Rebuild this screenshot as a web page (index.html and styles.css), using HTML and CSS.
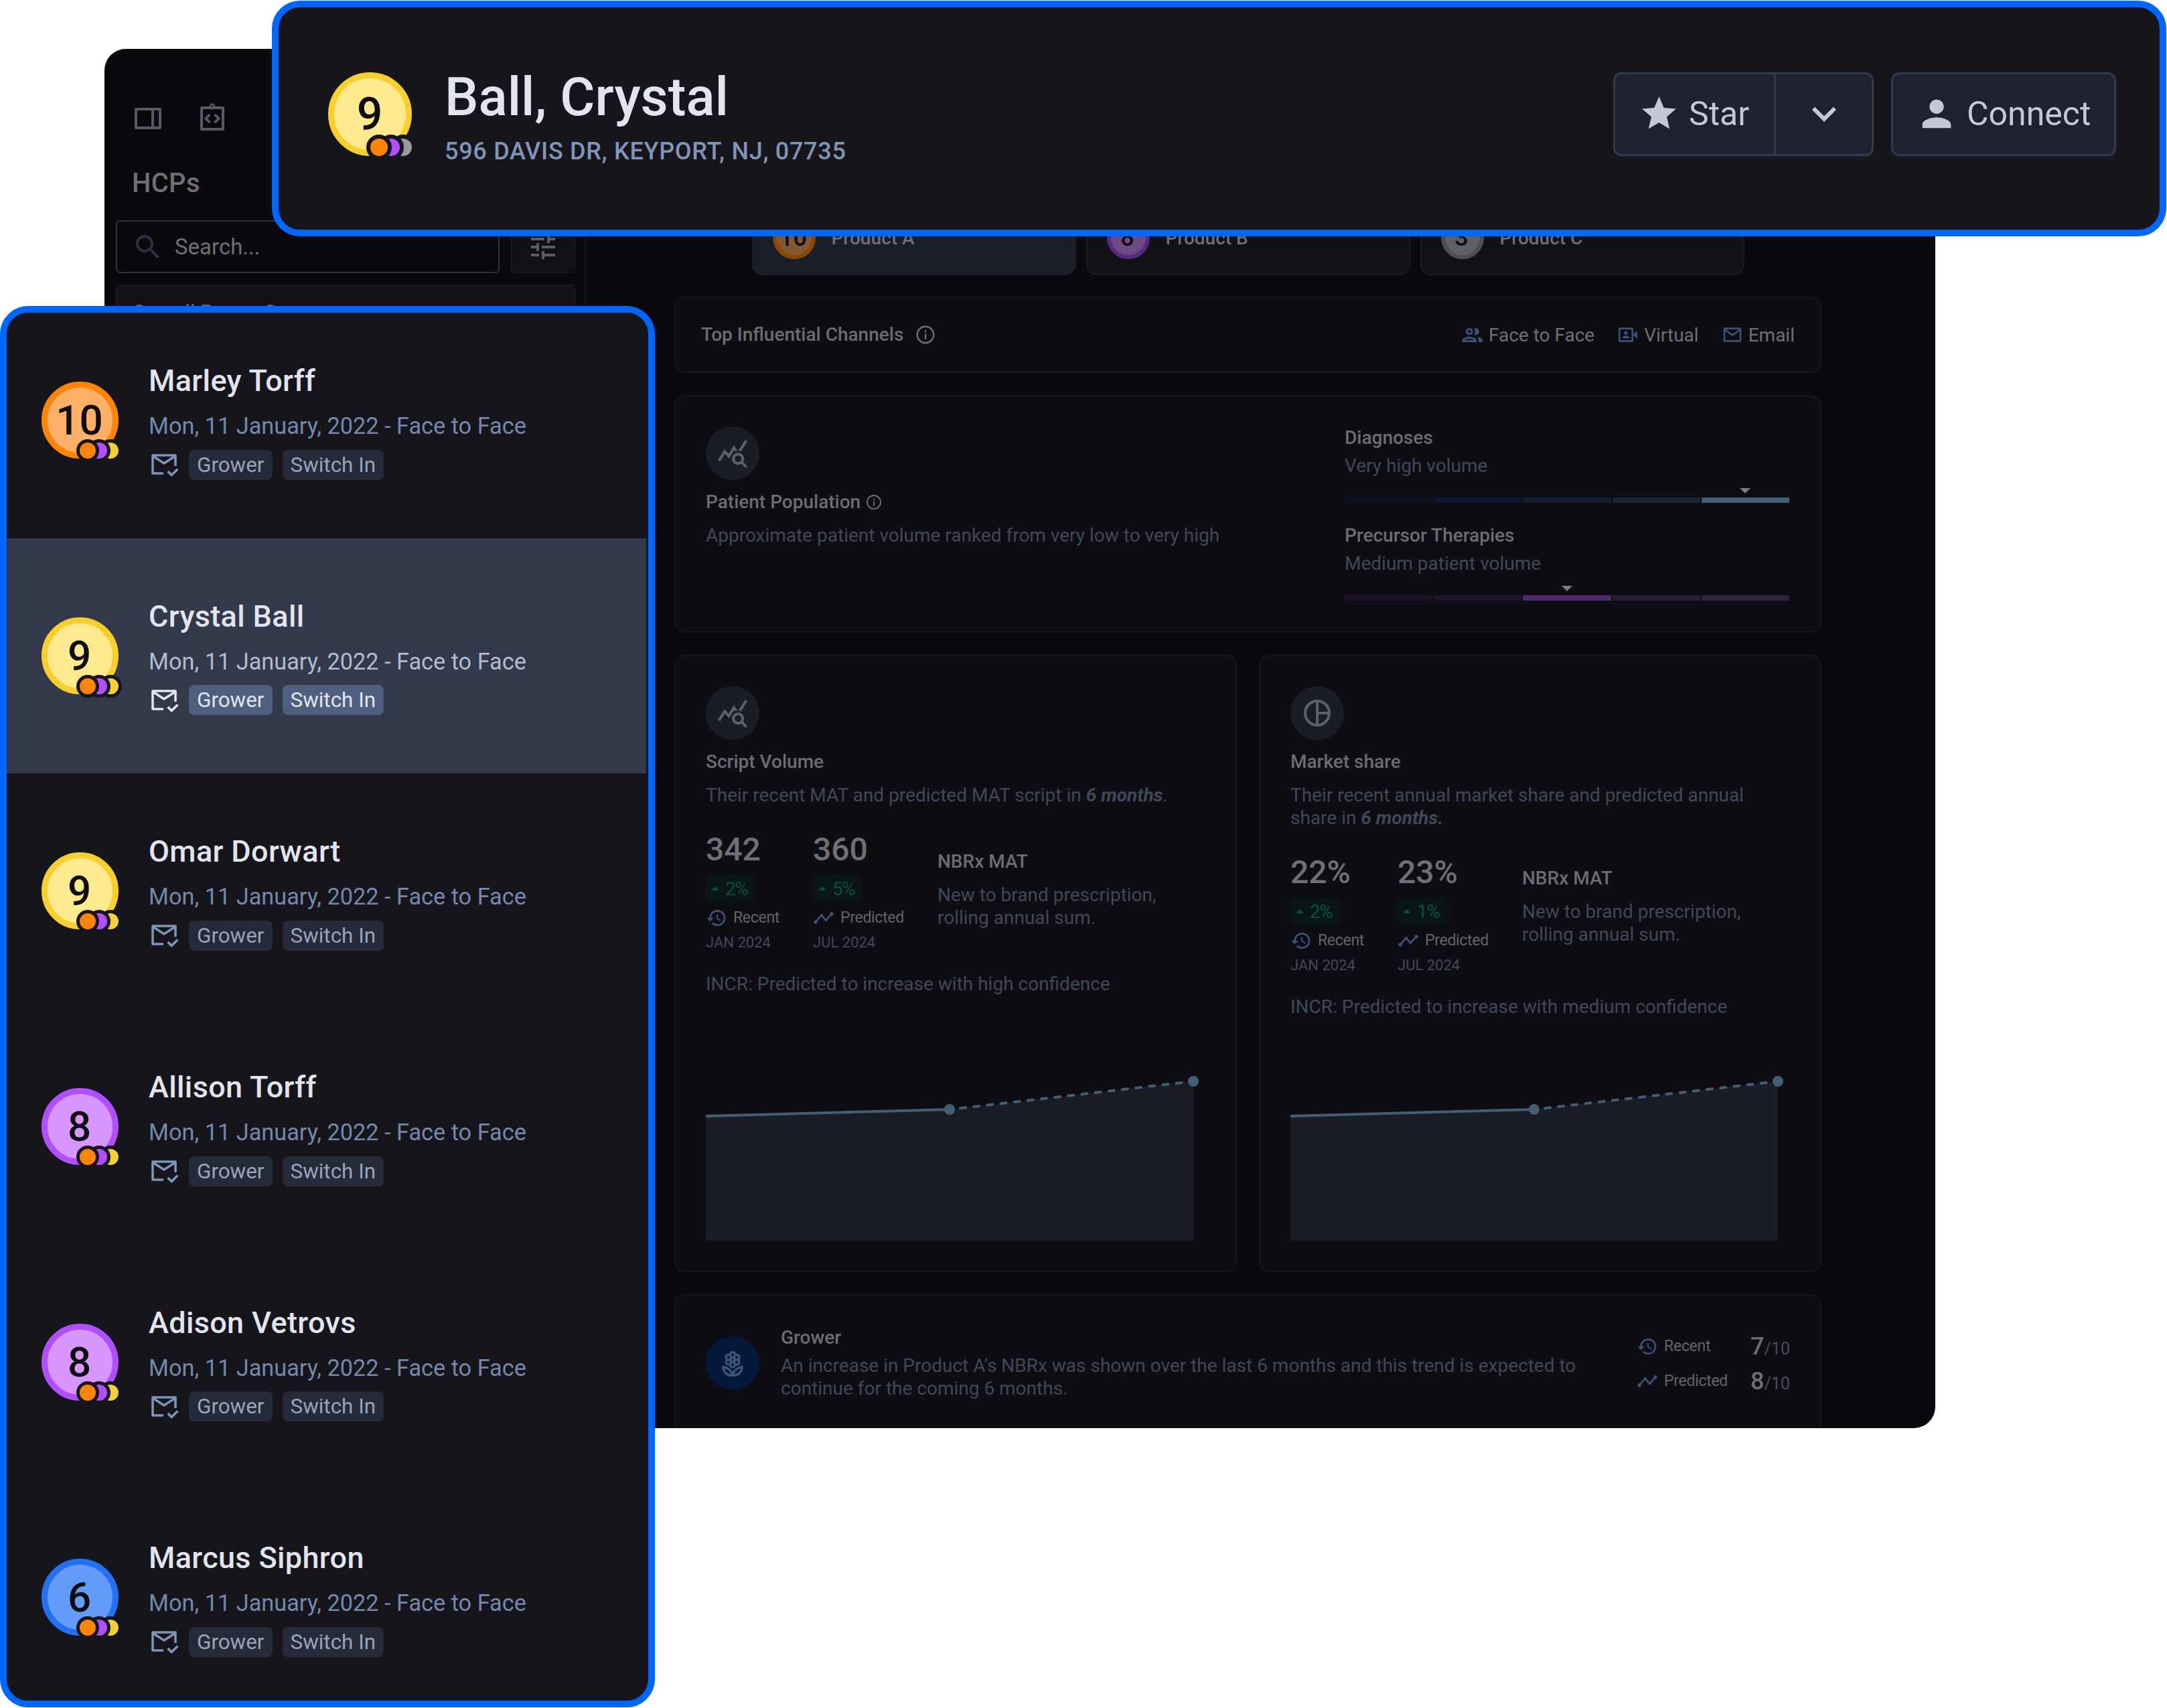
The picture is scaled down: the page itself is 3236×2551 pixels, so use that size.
FILE: index.html
```html
<!DOCTYPE html>
<html lang="en">
<head>
  <meta charset="UTF-8" />
  <meta name="viewport" content="width=device-width, initial-scale=1.0"/>
  <title>HCP Profile - Ball, Crystal</title>
  <link rel="stylesheet" href="styles.css">
</head>
<body>

  <!-- Icon set -->
  <svg class="icon-defs" width="0" height="0">
    <symbol id="i-panel" viewBox="0 0 24 24"><path d="M3 5h18v14H3zM15.5 5v14" fill="none" stroke="currentColor" stroke-width="2" stroke-linejoin="round"/></symbol>
    <symbol id="i-clip" viewBox="0 0 24 24"><path d="M4 4h16v16H4z" fill="none" stroke="currentColor" stroke-width="2" stroke-linejoin="round"/><circle cx="12" cy="3" r="1.6" fill="none" stroke="currentColor" stroke-width="1.2"/><path d="M10.2 9l-3 3 3 3M13.8 9l3 3-3 3" fill="none" stroke="currentColor" stroke-width="1.9"/></symbol>
    <symbol id="i-search" viewBox="0 0 24 24"><path fill="currentColor" d="M15.5 14h-.79l-.28-.27A6.471 6.471 0 0 0 16 9.5 6.5 6.5 0 1 0 9.5 16c1.61 0 3.09-.59 4.23-1.57l.27.28v.79l5 4.99L20.49 19l-4.99-5zm-6 0C7.01 14 5 11.99 5 9.5S7.01 5 9.5 5 14 7.01 14 9.5 11.99 14 9.5 14z"/></symbol>
    <symbol id="i-tune" viewBox="0 0 24 24"><path fill="currentColor" d="M3 17v2h6v-2H3zM3 5v2h10V5H3zm10 16v-2h8v-2h-8v-2h-2v6h2zM7 9v2H3v2h4v2h2V9H7zm14 4v-2H11v2h10zm-6-4h2V7h4V5h-4V3h-2v6z"/></symbol>
    <symbol id="i-star" viewBox="0 0 24 24"><path fill="currentColor" d="M12 17.27L18.18 21l-1.64-7.03L22 9.24l-7.19-.61L12 2 9.19 8.63 2 9.24l5.46 4.73L5.82 21z"/></symbol>
    <symbol id="i-person" viewBox="0 0 24 24"><path fill="currentColor" d="M12 12c2.21 0 4-1.79 4-4s-1.79-4-4-4-4 1.79-4 4 1.79 4 4 4zm0 2c-2.67 0-8 1.34-8 4v2h16v-2c0-2.66-5.33-4-8-4z"/></symbol>
    <symbol id="i-chevron" viewBox="0 0 24 24"><path fill="currentColor" d="M7.41 8.59L12 13.17l4.59-4.58L18 10l-6 6-6-6z"/></symbol>
    <symbol id="i-mail-read" viewBox="0 0 24 24"><path d="M11 18.5H3V5h17v8M3 5.5l8.5 5.5L20 5.5M14.3 17l2.8 2.8 4.6-4.6" fill="none" stroke="currentColor" stroke-width="1.8" stroke-linejoin="round"/></symbol>
    <symbol id="i-info" viewBox="0 0 24 24"><circle cx="12" cy="12" r="9.2" fill="none" stroke="currentColor" stroke-width="1.8"/><path fill="currentColor" d="M11.1 7h1.8v2h-1.8zM11.1 10.6h1.8V17h-1.8z"/></symbol>
    <symbol id="i-group" viewBox="1.6 1.3 21 21"><path fill="currentColor" d="M9 13.75c-2.34 0-7 1.17-7 3.5V19h14v-1.75c0-2.33-4.66-3.5-7-3.5zM4.34 17c.84-.58 2.87-1.25 4.66-1.25s3.82.67 4.66 1.25H4.34zM9 12c1.93 0 3.5-1.57 3.5-3.5S10.93 5 9 5 5.5 6.57 5.5 8.5 7.07 12 9 12zm0-5c.83 0 1.5.67 1.5 1.5S9.83 10 9 10s-1.5-.67-1.5-1.5S8.17 7 9 7zm7.04 6.81c1.16.84 1.96 1.96 1.96 3.44V19h4v-1.75c0-2.02-3.5-3.17-5.96-3.44zM15 12c1.93 0 3.5-1.57 3.5-3.5S16.93 5 15 5c-.54 0-1.04.13-1.5.35.63.89 1 1.98 1 3.15s-.37 2.26-1 3.15c.46.22.96.35 1.5.35z"/></symbol>
    <symbol id="i-virtual" viewBox="0 0 24 24"><path d="M2.5 5H17v14H2.5z" fill="none" stroke="currentColor" stroke-width="2" stroke-linejoin="round"/><circle cx="9.8" cy="10" r="2" fill="currentColor"/><path fill="currentColor" d="M6 16v-.8c0-1.5 2.5-2.2 3.8-2.2s3.8.7 3.8 2.2v.8zM18 11.5l4.5-4v9l-4.5-4z"/></symbol>
    <symbol id="i-email" viewBox="0 0 24 24"><path d="M3 5h18v14H3zM3 6l9 6.5L21 6" fill="none" stroke="currentColor" stroke-width="2" stroke-linejoin="round"/></symbol>
    <symbol id="i-stats" viewBox="0 0 24 24"><path fill="currentColor" d="M19.88 18.47c.44-.7.7-1.51.7-2.39 0-2.49-2.01-4.5-4.5-4.5s-4.5 2.01-4.5 4.5 2.01 4.5 4.49 4.5c.88 0 1.7-.26 2.39-.7L21.58 23 23 21.58l-3.12-3.11zm-3.8.11a2.5 2.5 0 1 1 0-5 2.5 2.5 0 0 1 0 5zm-.36-8.5c-.74.02-1.45.18-2.1.45l-.55-.83-3.8 6.18-3.01-3.52-3.63 5.81L1 17l5-8 3 3.5L13 6l2.72 4.08zm2.59.5c-.64-.28-1.33-.45-2.05-.49L21.38 2 23 3.18l-4.69 7.4z"/></symbol>
    <symbol id="i-pie" viewBox="0 0 24 24"><path d="M12 2.8v18.4M12 12h9" fill="none" stroke="currentColor" stroke-width="2"/><circle cx="12" cy="12" r="9" fill="none" stroke="currentColor" stroke-width="2"/></symbol>
    <symbol id="i-history" viewBox="0 0 24 24"><path fill="currentColor" d="M13 3a9 9 0 0 0-9 9H1l3.89 3.89.07.14L9 12H6c0-3.87 3.13-7 7-7s7 3.13 7 7-3.13 7-7 7c-1.93 0-3.68-.79-4.94-2.06l-1.42 1.42A8.954 8.954 0 0 0 13 21a9 9 0 0 0 0-18zm-1 5v5l4.28 2.54.72-1.21-3.5-2.08V8H12z"/></symbol>
    <symbol id="i-timeline" viewBox="0 0 24 24"><path d="M3 16.5L9.5 9l5 5.5L21 7.5" fill="none" stroke="currentColor" stroke-width="2"/><g fill="currentColor"><circle cx="3" cy="16.5" r="2"/><circle cx="9.5" cy="9" r="1.5"/><circle cx="14.5" cy="14.5" r="1.5"/><circle cx="21" cy="7.5" r="2"/></g></symbol>
    <symbol id="i-flower" viewBox="0 0 24 24">
      <g fill="currentColor"><circle cx="12" cy="5.4" r="2.6"/><circle cx="8.8" cy="7.5" r="2.6"/><circle cx="15.2" cy="7.5" r="2.6"/><circle cx="8.8" cy="11.2" r="2.6"/><circle cx="15.2" cy="11.2" r="2.6"/><circle cx="12" cy="13.1" r="2.6"/><circle cx="12" cy="9.4" r="3"/></g>
      <g fill="#041839"><circle cx="12" cy="5.7" r="1"/><circle cx="8.9" cy="7.6" r="1"/><circle cx="15.1" cy="7.6" r="1"/><circle cx="8.9" cy="11.2" r="1"/><circle cx="15.1" cy="11.2" r="1"/><circle cx="12" cy="13.1" r="1"/><circle cx="12" cy="9.4" r=".7"/></g>
      <path d="M4.9 14.9c3.8.4 6.5 2.7 7 6.3-4 0-6.7-2.5-7-6.3zM19.1 14.9c-3.8.4-6.5 2.7-7 6.3 4 0 6.7-2.5 7-6.3z" fill="none" stroke="currentColor" stroke-width="1.7" stroke-linejoin="round"/>
    </symbol>
  </svg>

  <!-- App window -->
  <div class="app">
    <aside class="sidebar">
      <div class="sidebar-tools">
        <svg class="icon-48"><use href="#i-panel"/></svg>
        <svg class="icon-48"><use href="#i-clip"/></svg>
      </div>
      <h2>HCPs</h2>
      <div class="search-row">
        <div class="search"><svg class="icon-48"><use href="#i-search"/></svg><span>Search...</span></div>
        <div class="filter"><svg class="icon-48"><use href="#i-tune"/></svg></div>
      </div>
      <div class="select">Overall Power Score</div>
    </aside>

    <main class="content">
      <div class="tabs">
        <div class="tab active"><div class="score score-sm orange">10</div>Product A</div>
        <div class="tab"><div class="score score-sm purple">8</div>Product B</div>
        <div class="tab"><div class="score score-sm gray">3</div>Product C</div>
      </div>

      <section class="card channels">
        <h3>Top Influential Channels</h3>
        <svg class="icon-32"><use href="#i-info"/></svg>
        <div class="channel-list">
          <span><svg class="icon-32"><use href="#i-group"/></svg>Face to Face</span>
          <span><svg class="icon-32"><use href="#i-virtual"/></svg>Virtual</span>
          <span><svg class="icon-32"><use href="#i-email"/></svg>Email</span>
        </div>
      </section>

      <section class="card population">
        <div>
          <div class="round"><svg class="icon-48"><use href="#i-stats"/></svg></div>
          <h3>Patient Population <svg class="icon-26"><use href="#i-info"/></svg></h3>
          <p>Approximate patient volume ranked from very low to very high</p>
        </div>
        <div class="volumes">
          <h3>Diagnoses</h3>
          <p>Very high volume</p>
          <div class="scale blue"><i></i><i></i><i></i><i></i><i class="on"></i></div>
          <h3>Precursor Therapies</h3>
          <p>Medium patient volume</p>
          <div class="scale violet"><i></i><i></i><i class="on"></i><i></i><i></i></div>
        </div>
      </section>

      <div class="columns">
        <section class="card metric">
          <div class="round"><svg class="icon-48"><use href="#i-stats"/></svg></div>
          <h3>Script Volume</h3>
          <p>Their recent MAT and predicted MAT script in <b>6 months</b>.</p>
          <div class="stats">
            <div class="stat">
              <strong>342</strong>
              <span class="delta">2%</span>
              <span class="label"><svg class="icon-32"><use href="#i-history"/></svg>Recent</span>
              <small>JAN 2024</small>
            </div>
            <div class="stat">
              <strong>360</strong>
              <span class="delta">5%</span>
              <span class="label"><svg class="icon-32"><use href="#i-timeline"/></svg>Predicted</span>
              <small>JUL 2024</small>
            </div>
            <div class="about">
              <h3>NBRx MAT</h3>
              <p>New to brand prescription,<br>rolling annual sum.</p>
            </div>
          </div>
          <p class="trend">INCR: Predicted to increase with high confidence</p>
          <svg class="chart" viewBox="0 0 728 253">
            <path class="area" d="M0 67L364 57 728 15V253H0z"/>
            <path class="line" d="M0 67L364 57"/>
            <path class="line dashed" d="M380 55.2L728 15"/>
            <circle cx="364" cy="57" r="8"/><circle cx="728" cy="15" r="8"/>
          </svg>
        </section>

        <section class="card metric market">
          <div class="round"><svg class="icon-48"><use href="#i-pie"/></svg></div>
          <h3>Market share</h3>
          <p>Their recent annual market share and predicted annual<br>share in <b>6 months.</b></p>
          <div class="stats">
            <div class="stat">
              <strong>22%</strong>
              <span class="delta">2%</span>
              <span class="label"><svg class="icon-32"><use href="#i-history"/></svg>Recent</span>
              <small>JAN 2024</small>
            </div>
            <div class="stat">
              <strong>23%</strong>
              <span class="delta">1%</span>
              <span class="label"><svg class="icon-32"><use href="#i-timeline"/></svg>Predicted</span>
              <small>JUL 2024</small>
            </div>
            <div class="about">
              <h3>NBRx MAT</h3>
              <p>New to brand prescription,<br>rolling annual sum.</p>
            </div>
          </div>
          <p class="trend">INCR: Predicted to increase with medium confidence</p>
          <svg class="chart" viewBox="0 0 728 253">
            <path class="area" d="M0 67L364 57 728 15V253H0z"/>
            <path class="line" d="M0 67L364 57"/>
            <path class="line dashed" d="M380 55.2L728 15"/>
            <circle cx="364" cy="57" r="8"/><circle cx="728" cy="15" r="8"/>
          </svg>
        </section>
      </div>

      <section class="card grower">
        <div class="round navy"><svg class="icon-48"><use href="#i-flower"/></svg></div>
        <div class="grower-text">
          <h3>Grower</h3>
          <p>An increase in Product A’s NBRx was shown over the last 6 months and this trend is expected to<br>continue for the coming 6 months.</p>
        </div>
        <div class="ratings">
          <span class="label"><svg class="icon-32"><use href="#i-history"/></svg>Recent</span>
          <span class="rating"><b>7</b>/10</span>
          <span class="label"><svg class="icon-32"><use href="#i-timeline"/></svg>Predicted</span>
          <span class="rating"><b>8</b>/10</span>
        </div>
      </section>
    </main>
  </div>

  <!-- Profile header -->
  <header class="profile">
    <div class="score score-lg yellow">9<div class="dots"><i class="d-orange"></i><i class="d-purple"></i><i class="d-gray"></i></div></div>
    <div class="profile-name">
      <h1>Ball, Crystal</h1>
      <p>596 DAVIS DR, KEYPORT, NJ, 07735</p>
    </div>
    <div class="actions">
      <div class="split">
        <button class="star"><svg><use href="#i-star"/></svg>Star</button>
        <button class="more"><svg><use href="#i-chevron"/></svg></button>
      </div>
      <button class="connect"><svg><use href="#i-person"/></svg>Connect</button>
    </div>
  </header>

  <!-- HCP list -->
  <div class="list-panel">
    <ul class="list">
      <li>
        <div class="score orange">10<div class="dots"><i class="d-orange"></i><i class="d-purple"></i><i class="d-yellow"></i></div></div>
        <div class="info"><h2>Marley Torff</h2><p>Mon, 11 January, 2022 - Face to Face</p>
          <div class="chips"><svg class="icon-48"><use href="#i-mail-read"/></svg><span>Grower</span><span>Switch In</span></div></div>
      </li>
      <li class="selected">
        <div class="score yellow">9<div class="dots"><i class="d-orange"></i><i class="d-purple"></i><i class="d-yellow"></i></div></div>
        <div class="info"><h2>Crystal Ball</h2><p>Mon, 11 January, 2022 - Face to Face</p>
          <div class="chips"><svg class="icon-48"><use href="#i-mail-read"/></svg><span>Grower</span><span>Switch In</span></div></div>
      </li>
      <li>
        <div class="score yellow">9<div class="dots"><i class="d-orange"></i><i class="d-purple"></i><i class="d-yellow"></i></div></div>
        <div class="info"><h2>Omar Dorwart</h2><p>Mon, 11 January, 2022 - Face to Face</p>
          <div class="chips"><svg class="icon-48"><use href="#i-mail-read"/></svg><span>Grower</span><span>Switch In</span></div></div>
      </li>
      <li>
        <div class="score purple">8<div class="dots"><i class="d-orange"></i><i class="d-purple"></i><i class="d-yellow"></i></div></div>
        <div class="info"><h2>Allison Torff</h2><p>Mon, 11 January, 2022 - Face to Face</p>
          <div class="chips"><svg class="icon-48"><use href="#i-mail-read"/></svg><span>Grower</span><span>Switch In</span></div></div>
      </li>
      <li>
        <div class="score purple">8<div class="dots"><i class="d-orange"></i><i class="d-purple"></i><i class="d-yellow"></i></div></div>
        <div class="info"><h2>Adison Vetrovs</h2><p>Mon, 11 January, 2022 - Face to Face</p>
          <div class="chips"><svg class="icon-48"><use href="#i-mail-read"/></svg><span>Grower</span><span>Switch In</span></div></div>
      </li>
      <li>
        <div class="score blue">6<div class="dots"><i class="d-orange"></i><i class="d-purple"></i><i class="d-yellow"></i></div></div>
        <div class="info"><h2>Marcus Siphron</h2><p>Mon, 11 January, 2022 - Face to Face</p>
          <div class="chips"><svg class="icon-48"><use href="#i-mail-read"/></svg><span>Grower</span><span>Switch In</span></div></div>
      </li>
    </ul>
  </div>

</body>
</html>
```
FILE: styles.css
```css
* {
  box-sizing: border-box;
}

body {
  position: relative;
  width: 3236px;
  height: 2551px;
  margin: 0;
  overflow: hidden;
  background: #fff;
  font-family: Roboto, "Liberation Sans", sans-serif;
}

h1, h2, h3, p, ul {
  margin: 0;
  padding: 0;
  font-weight: 500;
}

p, ul {
  font-weight: 400;
}

svg {
  display: block;
  flex: none;
}

.icon-defs {
  position: absolute;
}

.icon-26 { width: 26px; height: 26px; }
.icon-32 { width: 32px; height: 32px; }
.icon-48 { width: 48px; height: 48px; }

/* App window */
.app {
  position: absolute;
  left: 156px;
  top: 73px;
  width: 2734px;
  height: 2060px;
  display: flex;
  overflow: hidden;
  border-radius: 32px;
  background: #0b090e;
  color: #6f6f74;
}

.sidebar {
  width: 719px;
  flex: none;
  padding: 80px 14px 0 17px;
  border-right: 2px solid #131319;
}

.sidebar-tools {
  display: flex;
  gap: 48px;
  padding-left: 24px;
  color: #565a66;
}

.sidebar h2 {
  margin-top: 49px;
  padding-left: 24px;
  font-size: 40px;
  line-height: 48px;
  letter-spacing: .3px;
}

.search-row {
  display: flex;
  gap: 17px;
  margin-top: 31px;
}

.search {
  width: 573px;
  height: 79px;
  display: flex;
  align-items: center;
  gap: 16px;
  padding-left: 22px;
  border: 2px solid #2b3342;
  border-radius: 6px;
  font-size: 33px;
}

.search svg {
  color: #2b3342;
}

.filter {
  flex: 1;
  display: flex;
  align-items: center;
  justify-content: center;
  border: 2px solid #17181f;
  border-radius: 6px;
  background: #111016;
  color: #5c5c63;
}

.select {
  height: 100px;
  margin-top: 17px;
  padding: 22px 22px;
  border: 2px solid #191a21;
  border-radius: 6px;
  background: #121117;
  font-size: 31px;
  line-height: 36px;
}

.content {
  flex: 1;
  display: flex;
  flex-direction: column;
  gap: 33px;
  padding: 226px 170px 0 132px;
}

.tabs {
  flex: none;
  display: flex;
  justify-content: center;
  gap: 15px;
  height: 112px;
  margin-bottom: -1px;
}

.tab {
  width: 484px;
  display: flex;
  align-items: center;
  gap: 24px;
  padding-left: 29px;
  border: 2px solid #1b1c23;
  border-radius: 16px;
  background: #121117;
  font-size: 28px;
  font-weight: 500;
}

.tab.active {
  border-color: #1a1e26;
  background: #1a1e26;
}

.card {
  flex: none;
  border: 2px solid #14161c;
  border-radius: 16px;
  background: #0e0d13;
}

.card h3,
.card p {
  font-size: 28px;
  line-height: 34px;
}

.card h3 {
  color: #6c6c71;
}

.card p {
  margin-top: 16px;
  color: #404858;
}

.card b {
  font-weight: 700;
  font-style: italic;
}

.channels {
  height: 114px;
  display: flex;
  align-items: center;
  padding: 0 38px;
  gap: 17px;
}

.channel-list {
  display: flex;
  gap: 34px;
  margin-left: auto;
  font-size: 28px;
}

.channel-list span {
  display: flex;
  align-items: center;
  gap: 8px;
}

.channel-list svg {
  color: #3f5078;
}

.population {
  height: 355px;
  display: flex;
  justify-content: space-between;
  padding: 45px 46px 45px 45px;
}

.population h3 {
  display: flex;
  align-items: center;
  gap: 7px;
}

.round {
  width: 80px;
  height: 80px;
  flex: none;
  display: flex;
  align-items: center;
  justify-content: center;
  border-radius: 50%;
  background: #1a1d25;
  color: #5f6067;
}

.round.navy {
  background: #041839;
  color: #3f5278;
}

.round + h3 {
  margin-top: 16px;
}

.volumes {
  width: 664px;
}

.card.population .volumes p {
  margin-top: 8px;
}

.scale {
  display: flex;
  gap: 2px;
  margin: 30px 0 32px;
}

.scale i {
  position: relative;
  flex: 1;
  height: 8px;
}

.scale.blue i:nth-child(1) { background: #0a1226; }
.scale.blue i:nth-child(2) { background: #0a1832; }
.scale.blue i:nth-child(3) { background: #0f2035; }
.scale.blue i:nth-child(4) { background: #1a2535; }
.scale.blue i:nth-child(5) { background: #435f74; }
.scale.violet i:nth-child(1) { background: #1a1127; }
.scale.violet i:nth-child(2) { background: #20132c; }
.scale.violet i:nth-child(3) { background: #4f276f; }
.scale.violet i:nth-child(4) { background: #2c1c35; }
.scale.violet i:nth-child(5) { background: #31233c; }

.scale .on::before {
  content: "";
  position: absolute;
  left: 50%;
  bottom: 14px;
  margin-left: -8px;
  border: 8px solid transparent;
  border-top-color: #7b7b80;
  border-bottom: 0;
}

.columns {
  display: grid;
  grid-template-columns: 1fr 1fr;
  gap: 33px;
}

.metric {
  height: 922px;
  display: flex;
  flex-direction: column;
  padding: 45px;
}

.stats {
  display: grid;
  grid-template-columns: 160px 186px 1fr;
  margin-top: 36px;
}

.stat {
  display: flex;
  flex-direction: column;
  align-items: flex-start;
}

.stat strong {
  font-size: 48px;
  line-height: 56px;
  font-weight: 500;
}

.delta {
  display: flex;
  align-items: center;
  gap: 9px;
  width: 74px;
  height: 40px;
  margin-top: 10px;
  padding-left: 8px;
  border-radius: 3px;
  background: #0a1518;
  color: #045237;
  font-size: 28px;
  letter-spacing: -1.5px;
}

.delta::before {
  content: "";
  border: 6px solid transparent;
  border-top: 0;
  border-bottom-color: #045237;
}

.label {
  display: flex;
  align-items: center;
  gap: 9px;
  margin-top: 8px;
  font-size: 23px;
  line-height: 32px;
  letter-spacing: -.3px;
  color: #64646a;
}

.label svg {
  color: #3f5078;
}

.stat small {
  margin-top: 7px;
  font-size: 22px;
  line-height: 28px;
  color: #404858;
}

.about {
  padding-top: 29px;
}

.market .about {
  padding-top: 20px;
}

.card .trend {
  margin-top: 31px;
}

.chart {
  width: 728px;
  height: 253px;
  margin-top: auto;
  overflow: visible;
  fill: #435f74;
}

.chart .area {
  fill: #1a1d25;
}

.chart .line {
  fill: none;
  stroke: #435f74;
  stroke-width: 4;
}

.chart .dashed {
  stroke-dasharray: 8 12.3;
  stroke-linecap: round;
}

.grower {
  height: 280px;
  display: flex;
  align-items: flex-start;
  padding: 45px;
}

.grower .round {
  margin-top: 16px;
}

.grower-text {
  margin: 1px 0 0 32px;
}

.card.grower p {
  margin-top: 8px;
}

.ratings {
  display: grid;
  grid-template-columns: 170px auto;
  row-gap: 20px;
  margin: 15px 0 0 auto;
}

.ratings .label {
  margin-top: 0;
}

.rating {
  height: 32px;
  font-size: 25px;
  line-height: 32px;
  color: #4a4d58;
}

.rating b {
  font-size: 36px;
  font-style: normal;
  font-weight: 500;
  color: #6c6c71;
}

/* Score badges */
.score {
  position: relative;
  width: 115px;
  height: 115px;
  flex: none;
  display: flex;
  align-items: center;
  justify-content: center;
  padding-right: 2px;
  border: 9px solid;
  border-radius: 50%;
  color: #0e0d12;
  font-size: 62px;
  font-weight: 500;
}

.orange { background: #ffb066; border-color: #ff8408; }
.yellow { background: #ffe98f; border-color: #f7cf2f; }
.purple { background: #d896ff; border-color: #b14fff; }
.score.blue { background: #649cfb; border-color: #2470f5; }

.score-lg {
  width: 125px;
  height: 125px;
  font-size: 68px;
}

.score-sm {
  width: 64px;
  height: 64px;
  border-width: 6px;
  font-size: 36px;
}

.score-sm.orange { background: #845730; border-color: #8b4604; }
.score-sm.purple { background: #6c4a84; border-color: #592884; }
.score-sm.gray { background: #605f62; border-color: #4f4e53; }

.dots {
  position: absolute;
  right: -14px;
  bottom: -14px;
  display: flex;
}

.dots i {
  position: relative;
  width: 34px;
  height: 34px;
  margin-left: -17px;
  border: 5px solid #16151b;
  border-radius: 50%;
}

.dots i:nth-child(1) { z-index: 3; }
.dots i:nth-child(2) { z-index: 2; }

.score-lg .dots {
  right: -15px;
  bottom: -15px;
}

.score-lg .dots i {
  width: 38px;
  height: 38px;
  margin-left: -20px;
  border-width: 6px;
}

.d-orange { background: #ff8408; }
.d-purple { background: #b14fff; }
.d-yellow { background: #f5cf3a; }
.d-gray { background: #9b9aa0; }

/* Profile header */
.profile {
  position: absolute;
  left: 406px;
  top: 1px;
  width: 2829px;
  height: 352px;
  display: flex;
  align-items: flex-start;
  padding: 89px 65px 0 74px;
  border: 10px solid #0066ff;
  border-radius: 42px;
  background: #16151b;
}

.profile .score {
  margin-top: 8px;
  padding-right: 1px;
}

.profile-name {
  margin-left: 49px;
}

.profile h1 {
  font-size: 80px;
  line-height: 90px;
  color: #e2e4ef;
}

.profile p {
  margin-top: 14px;
  font-size: 36px;
  font-weight: 500;
  line-height: 44px;
  letter-spacing: .7px;
  color: #8094b5;
}

.actions {
  display: flex;
  gap: 26px;
  margin: 8px 0 0 auto;
}

.split,
.connect {
  height: 125px;
  border: 3px solid #313b50;
  border-radius: 12px;
  background: #1f212c;
  box-shadow: 0 4px 10px rgba(49,59,80,0.2);
}

.split {
  width: 389px;
  display: flex;
}

button {
  display: flex;
  align-items: center;
  padding: 0 0 2px;
  border: none;
  background: none;
  color: #c4c8d8;
  font-family: inherit;
  font-size: 50px;
}

.star {
  width: 240px;
  padding-left: 35px;
  gap: 14px;
  border-right: 3px solid #313b50;
}

.star svg {
  width: 61px;
  height: 61px;
}

.more {
  flex: 1;
  justify-content: center;
}

.more svg {
  width: 72px;
  height: 72px;
}

.connect {
  width: 336px;
  padding-left: 33px;
  gap: 13px;
}

.connect svg {
  width: 64px;
  height: 64px;
}

/* HCP list */
.list-panel {
  position: absolute;
  left: 0;
  top: 457px;
  width: 978px;
  height: 2093px;
  overflow: hidden;
  border: 10px solid #0066ff;
  border-radius: 42px;
  background: #16151b;
}

.list {
  margin-top: -15px;
  padding-right: 3px;
  list-style: none;
}

.list li {
  height: 351.7px;
  display: flex;
  align-items: flex-start;
  padding: 90px 0 0 52px;
}

.list .selected {
  background: #31394b;
}

.list .score {
  margin-top: 28px;
}

.info {
  margin-left: 45px;
}

.info h2 {
  font-size: 45px;
  line-height: 54px;
  letter-spacing: .35px;
  color: #e2e4ef;
}

.info p {
  margin-top: 18px;
  font-size: 34.3px;
  line-height: 44px;
  color: #7488ab;
}

.chips {
  display: flex;
  align-items: center;
  margin-top: 12px;
  color: #8094b5;
}

.chips span {
  height: 45px;
  margin-left: 12px;
  padding: 0 12px;
  border-radius: 8px;
  background: #252a38;
  color: #9aa3b8;
  font-size: 31.4px;
  line-height: 45px;
}

.chips span + span {
  margin-left: 15px;
}

.selected .info p {
  color: #b3bccf;
}

.selected .chips {
  color: #e2e4ef;
}

.selected .chips span {
  background: #4f5f80;
  color: #e2e4ef;
}
```
